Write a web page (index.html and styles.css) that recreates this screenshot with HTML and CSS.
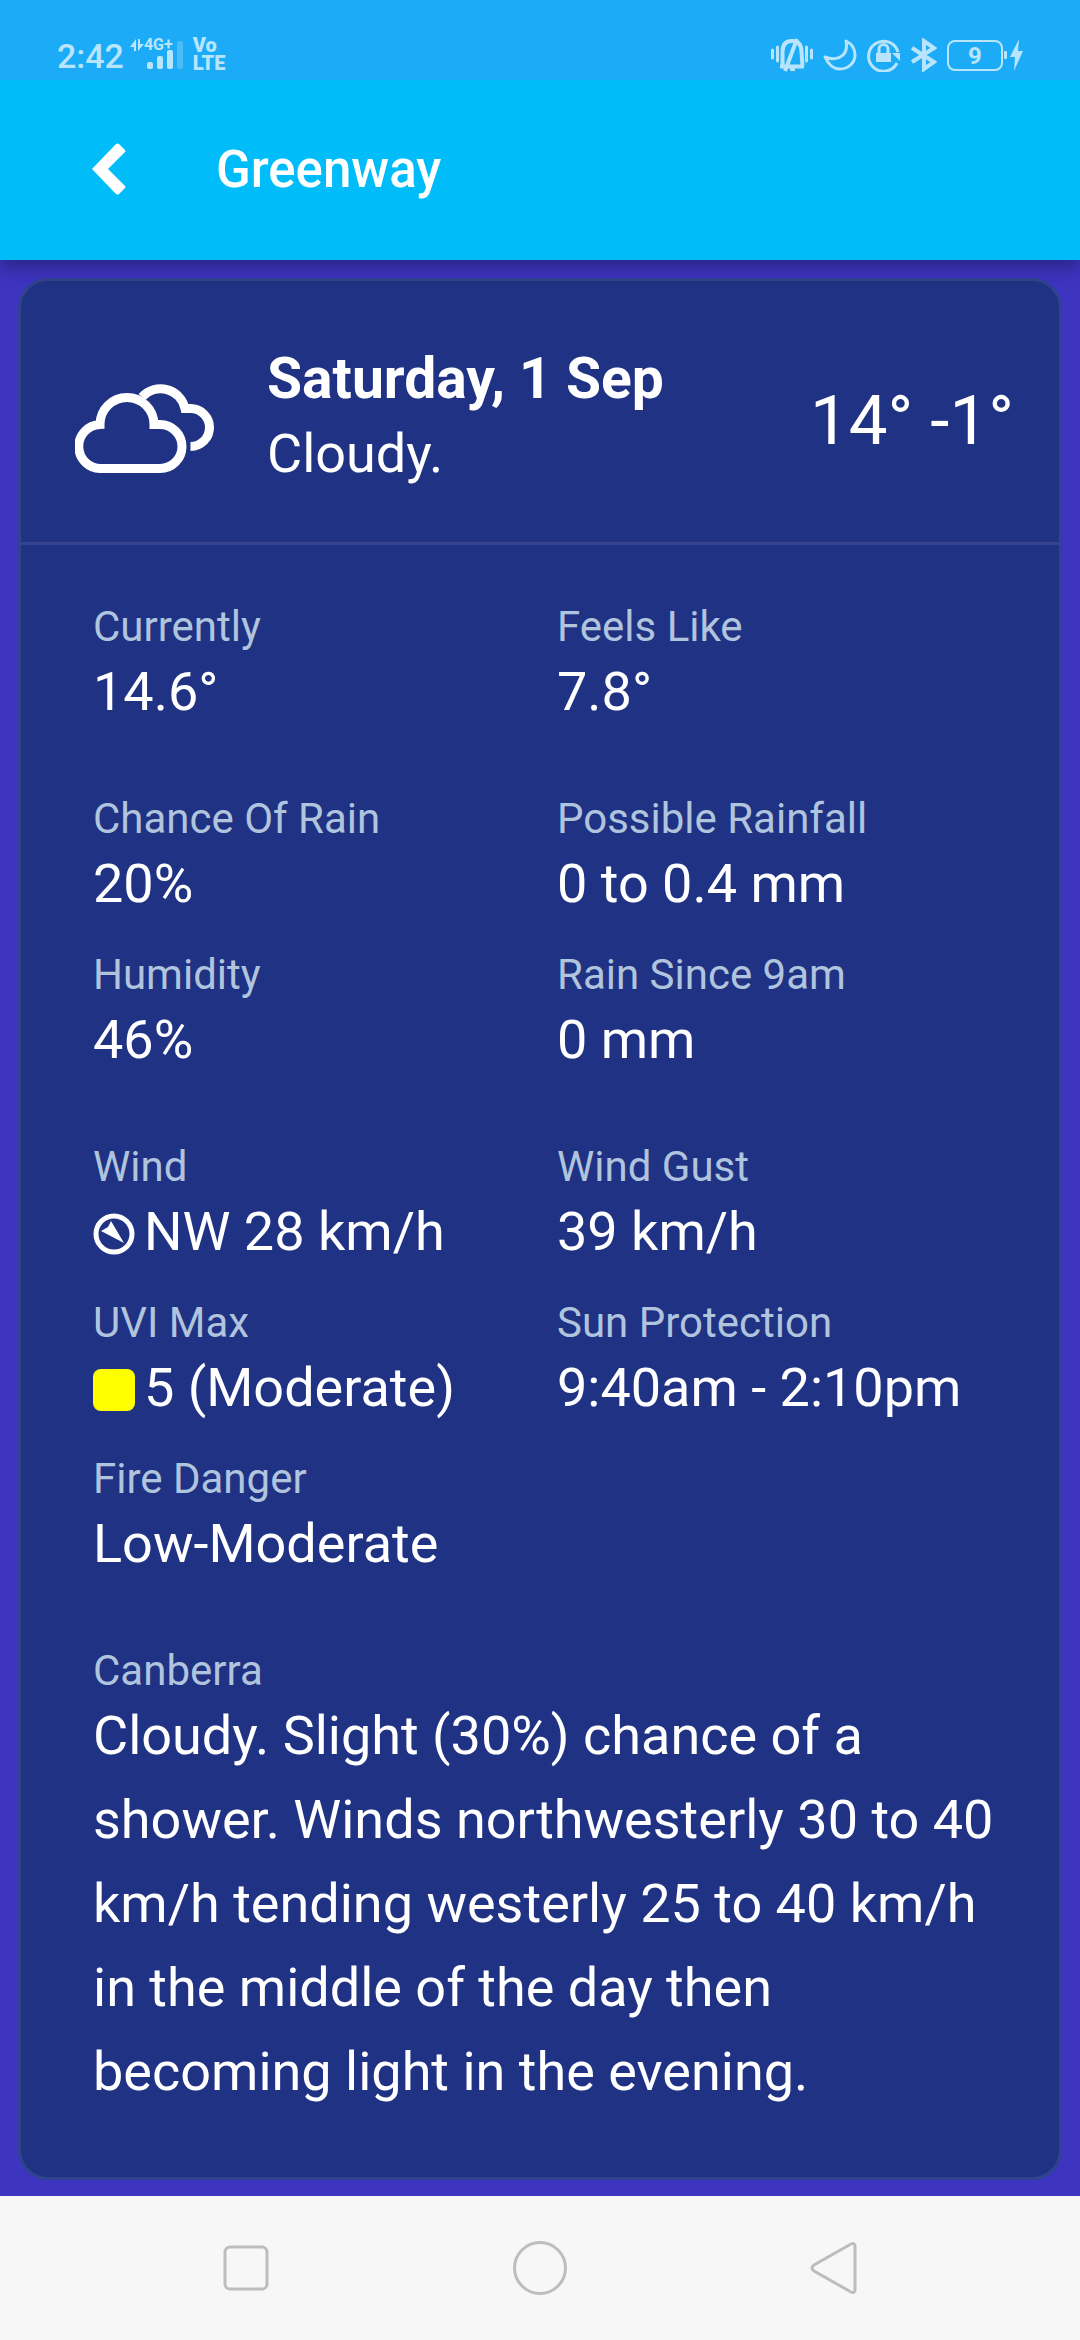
FILE: index.html
```html
<!DOCTYPE html>
<html lang="en">
<head>
    <meta charset="UTF-8">
    <meta name="viewport" content="width=device-width, initial-scale=1.0">
    <title>Greenway</title>
    <link rel="stylesheet" href="styles.css">
</head>
<body>
    <div class="status-bar">
        <div class="status-left">
            <span class="clock">2:42</span>
            <div class="signal">
                <div class="network">
                    <svg width="14" height="12" viewBox="0 0 14 12"><path d="M6 0v12H4V8H0zM8 0v12l6-7h-4V0z" fill="currentColor"/></svg>
                    <span>4G+</span>
                </div>
                <svg class="bars" width="36" height="28" viewBox="0 0 36 28" fill="currentColor">
                    <rect x="0" y="21" width="6" height="7" rx="2"/>
                    <rect x="10" y="15" width="6" height="13" rx="2"/>
                    <rect x="20" y="9" width="6" height="19" rx="2"/>
                    <rect x="30" y="0" width="6" height="28" rx="2" opacity=".3"/>
                </svg>
            </div>
            <div class="volte"><span>Vo</span><span>LTE</span></div>
        </div>
        <div class="status-right">
            <!-- silent -->
            <svg width="42" height="34" viewBox="0 0 42 34" fill="none" stroke="currentColor" stroke-width="3">
                <path d="M1.5 12v8M6.5 9v14M35.5 9v14M40.5 12v8" stroke-linecap="round"/>
                <path d="M9 28.500h24M11.5 28V14c0-7 3-11 9.500-11s9.500 4 9.500 11l1 14" stroke-width="4"/>
                <path d="M26 1L14 33M19 31h5" stroke-width="4"/>
            </svg>
            <!-- do not disturb -->
            <svg width="34" height="32" viewBox="0 0 34 32" fill="none" stroke="currentColor" stroke-width="3" stroke-linejoin="round">
                <path d="M2 18c3 7 8 12 15 12 8 0 15-6 15-14 0-6-3-11-9-14 1 5 1 10-3 14-4 4-11 5-18 2z"/>
            </svg>
            <!-- rotation lock -->
            <svg width="34" height="34" viewBox="0 0 34 34" fill="none" stroke="currentColor" stroke-width="3">
                <path d="M30 25A15 15 0 1 1 31 14"/>
                <path d="M25 15h8v8z" fill="currentColor" stroke="none"/>
                <rect x="9" y="15" width="15" height="9" fill="currentColor" stroke="none"/>
                <path d="M12 16v-5a4 4 0 0 1 9 0v5"/>
            </svg>
            <!-- bluetooth -->
            <svg width="26" height="34" viewBox="0 0 26 34" fill="none" stroke="currentColor" stroke-width="4">
                <path d="M1 10l22 14-10 7V3l10 7L1 24"/>
            </svg>
            <div class="battery">
                <span class="battery-level">9</span>
                <svg width="20" height="32" viewBox="0 0 20 32" fill="currentColor">
                    <rect x="0" y="12" width="3" height="8" rx="1"/>
                    <path d="M15 0L6 18h5l-1 14 9-20h-5z"/>
                </svg>
            </div>
        </div>
    </div>

    <header class="toolbar">
        <button class="back-btn" aria-label="Back">
            <svg width="34" height="52" viewBox="0 0 34 52">
                <path d="M24 1q2-1 3 0l6 6q1 1 0 2L16 26l17 17q1 1 0 2l-6 6q-1 1-3 0L0 26z" fill="currentColor"/>
            </svg>
        </button>
        <h1>Greenway</h1>
    </header>

    <main>
        <section class="card">
            <div class="summary">
                <svg class="clouds" width="139" height="91" viewBox="0 0 139 91" fill="none" stroke="currentColor" stroke-width="9">
                    <path d="M26.5 86.500H85a22 22 0 0 0 0-44h-6a27 27 0 0 0-54 0 22 22 0 0 0 1.500 44z"/>
                    <path d="M67 15a25 25 0 0 1 43 11.500h5.500a19 19 0 0 1 0 38"/>
                </svg>
                <div class="day">
                    <h2>Saturday, 1 Sep</h2>
                    <p>Cloudy.</p>
                </div>
                <div class="temps">14° -1°</div>
            </div>

            <div class="details">
                <dl class="group">
                    <div><dt>Currently</dt><dd>14.6°</dd></div>
                    <div><dt>Feels Like</dt><dd>7.8°</dd></div>
                </dl>
                <dl class="group">
                    <div><dt>Chance Of Rain</dt><dd>20%</dd></div>
                    <div><dt>Possible Rainfall</dt><dd>0 to 0.4 mm</dd></div>
                    <div><dt>Humidity</dt><dd>46%</dd></div>
                    <div><dt>Rain Since 9am</dt><dd>0 mm</dd></div>
                </dl>
                <dl class="group">
                    <div>
                        <dt>Wind</dt>
                        <dd>
                            <svg class="marker" width="42" height="42" viewBox="0 0 42 42">
                                <circle cx="21" cy="21" r="18" fill="none" stroke="currentColor" stroke-width="5"/>
                                <path d="M18 8l13 22L8 18l7-4z" fill="currentColor"/>
                            </svg>NW 28 km/h
                        </dd>
                    </div>
                    <div><dt>Wind Gust</dt><dd>39 km/h</dd></div>
                    <div>
                        <dt>UVI Max</dt>
                        <dd><span class="marker uv-moderate"></span>5 (Moderate)</dd>
                    </div>
                    <div><dt>Sun Protection</dt><dd>9:40am - 2:10pm</dd></div>
                    <div><dt>Fire Danger</dt><dd>Low-Moderate</dd></div>
                </dl>
                <dl class="group">
                    <div class="wide">
                        <dt>Canberra</dt>
                        <dd>Cloudy. Slight (30%) chance of a shower. Winds northwesterly 30 to 40 km/h tending westerly 25 to 40 km/h in the middle of the day then becoming light in the evening.</dd>
                    </div>
                </dl>
            </div>
        </section>
    </main>

    <nav class="nav-bar">
        <button aria-label="Recent apps">
            <svg width="56" height="56" viewBox="0 0 56 56"><rect x="7" y="7" width="42" height="42" rx="5"/></svg>
        </button>
        <button aria-label="Home">
            <svg width="56" height="56" viewBox="0 0 56 56"><circle cx="28" cy="28" r="25.500"/></svg>
        </button>
        <button aria-label="Back">
            <svg width="56" height="56" viewBox="0 0 56 56"><path d="M45 4L8 25q-4 3 0 6l37 21q4 2 4-3V7q0-5-4-3z"/></svg>
        </button>
    </nav>
</body>
</html>
```
FILE: styles.css
```css
* {
    box-sizing: border-box;
    margin: 0;
    padding: 0;
}
body {
    display: flex;
    flex-direction: column;
    min-height: 100vh;
    background-color: #3d34c0;
    color: white;
    font-family: Roboto, Arial, sans-serif;
}
svg {
    display: block;
    flex-shrink: 0;
}
button {
    border: none;
    background: none;
    color: inherit;
}

/* Status bar */
.status-bar {
    display: flex;
    justify-content: space-between;
    height: 80px;
    padding: 36px 56px 0 57px;
    background-color: #1cabf6;
    color: #b8e5fc;
}
.status-left {
    display: flex;
}
.clock {
    font-size: 34px;
    line-height: 40px;
    font-weight: 500;
}
.signal {
    display: flex;
    margin-left: 6px;
}
.network {
    display: flex;
    align-items: center;
    height: 18px;
    font-size: 16px;
    line-height: 18px;
    font-weight: 700;
}
.bars {
    margin: 5px 0 0 -26px;
}
.volte {
    display: flex;
    flex-direction: column;
    margin-left: 10px;
    font-size: 20px;
    line-height: 18px;
    font-weight: 900;
}
.status-right {
    display: flex;
    align-items: center;
    gap: 10px;
    height: 38px;
}
.battery {
    display: flex;
    align-items: center;
    gap: 1px;
}
.battery-level {
    width: 56px;
    height: 31px;
    border: 2px solid currentColor;
    border-radius: 8px;
    font-size: 24px;
    line-height: 28px;
    font-weight: 700;
    text-align: center;
}

/* Toolbar */
.toolbar {
    display: flex;
    align-items: center;
    gap: 90px;
    height: 180px;
    padding: 0 92px 2px;
    background-color: #00bdf9;
    box-shadow: 0 6px 18px rgba(0, 0, 0, 0.35);
    clip-path: inset(0 0 -40px);
}
.toolbar h1 {
    font-size: 51px;
    font-weight: 500;
}

/* Forecast card */
main {
    flex: 1;
    padding: 18px 18px 16px;
}
.card {
    border: 3px solid #30438d;
    border-radius: 30px;
    background-color: #203283;
}
.summary {
    display: flex;
    align-items: center;
    padding: 60px 45px 42px 54px;
    border-bottom: 3px solid #36448f;
}
.clouds {
    margin-top: 14px;
}
.day {
    flex: 1;
    margin-left: 53px;
    padding-bottom: 9px;
    line-height: 75px;
}
.day h2 {
    font-size: 57px;
    font-weight: 700;
}
.day p {
    font-size: 54px;
}
.temps {
    font-size: 69px;
}
.details {
    display: flex;
    flex-direction: column;
    gap: 62px;
    padding: 59px 38px 63px 72px;
}
.group {
    display: grid;
    grid-template-columns: 1fr 1fr;
    row-gap: 26px;
}
.wide {
    grid-column: 1 / -1;
}
dt {
    color: #b0c4de;
    font-size: 42px;
    line-height: 46px;
}
dd {
    font-size: 54px;
    line-height: 84px;
}
.marker {
    display: inline-block;
    margin-right: 9px;
    vertical-align: -5px;
}
.uv-moderate {
    width: 42px;
    height: 42px;
    border-radius: 8px;
    background-color: yellow;
}

/* System navigation */
.nav-bar {
    display: flex;
    align-items: center;
    justify-content: space-between;
    height: 144px;
    padding: 0 218px;
    background-color: #f7f7f7;
}
.nav-bar svg {
    fill: none;
    stroke: #bdbdbd;
    stroke-width: 3;
}
```
